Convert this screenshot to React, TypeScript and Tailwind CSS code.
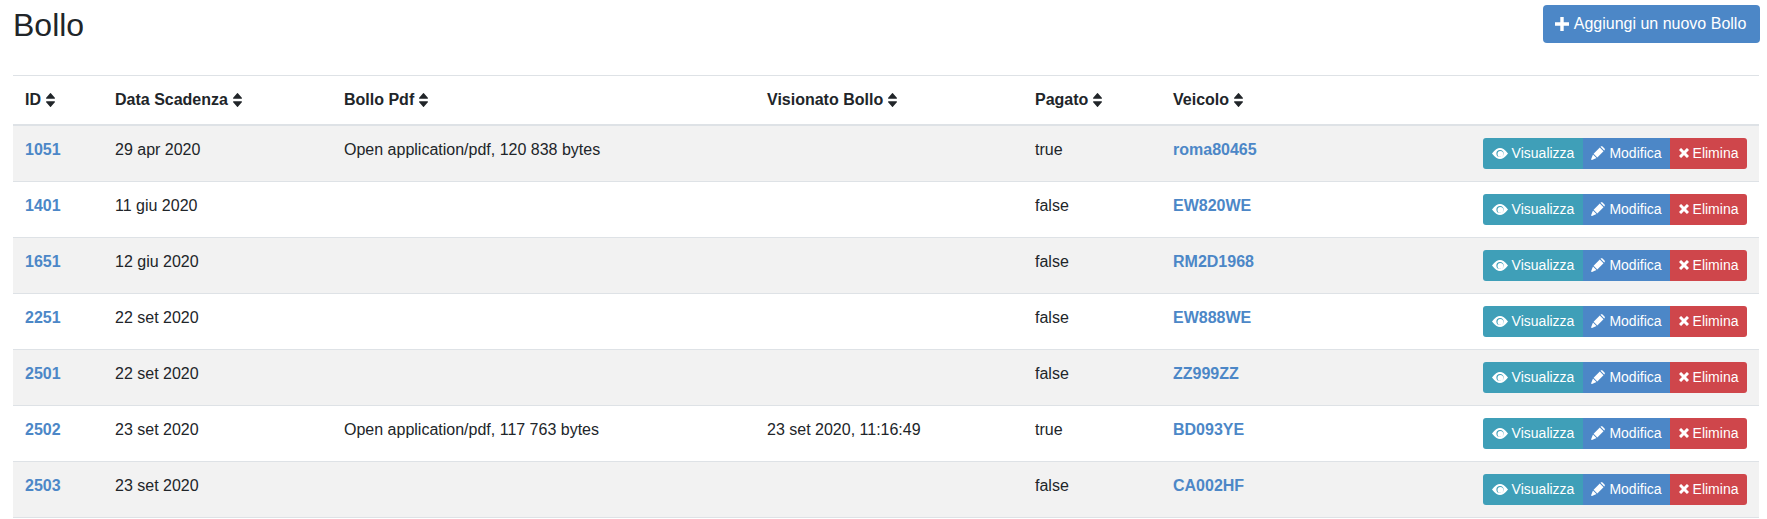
const rows = [
  { id: '1051', date: '29 apr 2020', pdf: 'Open application/pdf, 120 838 bytes', seen: '', paid: 'true', car: 'roma80465' },
  { id: '1401', date: '11 giu 2020', pdf: '', seen: '', paid: 'false', car: 'EW820WE' },
  { id: '1651', date: '12 giu 2020', pdf: '', seen: '', paid: 'false', car: 'RM2D1968' },
  { id: '2251', date: '22 set 2020', pdf: '', seen: '', paid: 'false', car: 'EW888WE' },
  { id: '2501', date: '22 set 2020', pdf: '', seen: '', paid: 'false', car: 'ZZ999ZZ' },
  { id: '2502', date: '23 set 2020', pdf: 'Open application/pdf, 117 763 bytes', seen: '23 set 2020, 11:16:49', paid: 'true', car: 'BD093YE' },
  { id: '2503', date: '23 set 2020', pdf: '', seen: '', paid: 'false', car: 'CA002HF' },
];

const headers = ['ID', 'Data Scadenza', 'Bollo Pdf', 'Visionato Bollo', 'Pagato', 'Veicolo'];

const SortIcon = () => (
  <svg viewBox="384 192 1024 1408" fill="currentColor" preserveAspectRatio="none" className="h-[14px] w-[9px]">
    <path d="M1408 1088q0 26-19 45l-448 448q-19 19-45 19t-45-19l-448-448q-19-19-19-45t19-45 45-19h896q26 0 45 19t19 45zm0-384q0 26-19 45t-45 19h-896q-26 0-45-19t-19-45 19-45l448-448q19-19 45-19t45 19l448 448q19 19 19 45z" />
  </svg>
);

const PlusIcon = () => (
  <svg viewBox="0 0 14 14" fill="currentColor" className="h-[14px] w-[14px]">
    <path d="M5.300 0h3.400v5.300h5.300v3.400h-5.300v5.300h-3.400v-5.300h-5.300v-3.400h5.300z" />
  </svg>
);

const EyeIcon = () => (
  <svg viewBox="0 0 16 11" fill="currentColor" fillRule="evenodd" className="h-[11px] w-[16px]">
    <path d="M0 5.500C3 1.400 5.500 0 8 0s5 1.400 8 5.500c-3 4.100-5.500 5.500-8 5.500S3 9.600 0 5.500zM4.400 5.500a3.600 3.600 0 1 0 7.200 0a3.600 3.600 0 1 0-7.200 0zM5.500 5.900a2.900 2.900 0 1 0 5.800 0a2.900 2.900 0 1 0-5.800 0z" />
  </svg>
);

const PencilIcon = () => (
  <svg viewBox="0 0 14 14" fill="currentColor" className="h-[14px] w-[14px]">
    <path d="M2.600 7.700l6.200-6.200 3.700 3.700-6.200 6.200zM9.500.800l.3-.3c.5-.5 1.200-.5 1.700 0l2 2c.5.500.5 1.200 0 1.700l-.3.300zM2 8.500l3.500 3.500-4.500 1.900c-.5.200-1-.3-.8-.8z" />
  </svg>
);

const RemoveIcon = () => (
  <svg viewBox="0 0 10 10" fill="none" stroke="currentColor" strokeWidth="3" className="h-[10px] w-[10px]">
    <path d="M1 1l8 8M9 1l-8 8" />
  </svg>
);

export default function App() {
  return (
    <div className="bg-white pl-[13px] pr-[7px] font-['Liberation_Sans',sans-serif] text-[16px] leading-[24px] text-[#212529]">
      <div className="flex h-[75px] items-start justify-between">
        <h2 className="mt-[6px] text-[32px] leading-[38px]">Bollo</h2>
        <button className="mt-[5px] flex h-[38px] w-[217px] items-center justify-center gap-[5px] rounded-[4px] bg-[#4c87c7] pr-[2px] text-[16px] text-white">
          <PlusIcon />
          Aggiungi un nuovo Bollo
        </button>
      </div>
      <table className="mr-px w-[1746px] table-fixed border-collapse">
        <colgroup>
          <col className="w-[90px]" />
          <col className="w-[229px]" />
          <col className="w-[423px]" />
          <col className="w-[268px]" />
          <col className="w-[138px]" />
          <col className="w-[200px]" />
          <col />
        </colgroup>
        <thead>
          <tr className="h-[49px] border-t border-t-[#dee2e6] border-b-2 border-b-[#dee2e6]">
            {headers.map((h) => (
              <th key={h} className="px-3 text-left font-bold">
                <span className="inline-flex items-center gap-[5px]">
                  {h}
                  <SortIcon />
                </span>
              </th>
            ))}
            <th />
          </tr>
        </thead>
        <tbody>
          {rows.map((r, i) => (
            <tr key={r.id} className={`border-b border-b-[#dee2e6] ${i % 2 === 0 ? 'bg-[#f2f2f2]' : 'bg-white'}`}>
              <td className="p-3 align-top font-bold text-[#4c87c7]">{r.id}</td>
              <td className="p-3 align-top">{r.date}</td>
              <td className="p-3 align-top">{r.pdf}</td>
              <td className="p-3 align-top">{r.seen}</td>
              <td className="p-3 align-top">{r.paid}</td>
              <td className="p-3 align-top font-bold text-[#4c87c7]">{r.car}</td>
              <td className="p-3 align-top">
                <div className="flex justify-end text-[14px] leading-[21px] text-white">
                  <button className="flex h-[31px] w-[100px] items-center justify-center gap-[4px] whitespace-nowrap rounded-l-[3px] bg-[#3f9fb8]">
                    <EyeIcon />
                    Visualizza
                  </button>
                  <button className="flex h-[31px] w-[87px] items-center justify-center gap-[4px] whitespace-nowrap bg-[#4c87c7]">
                    <PencilIcon />
                    Modifica
                  </button>
                  <button className="flex h-[31px] w-[77px] items-center justify-center gap-[4px] whitespace-nowrap rounded-r-[3px] bg-[#cf464b]">
                    <RemoveIcon />
                    Elimina
                  </button>
                </div>
              </td>
            </tr>
          ))}
        </tbody>
      </table>
    </div>
  );
}
